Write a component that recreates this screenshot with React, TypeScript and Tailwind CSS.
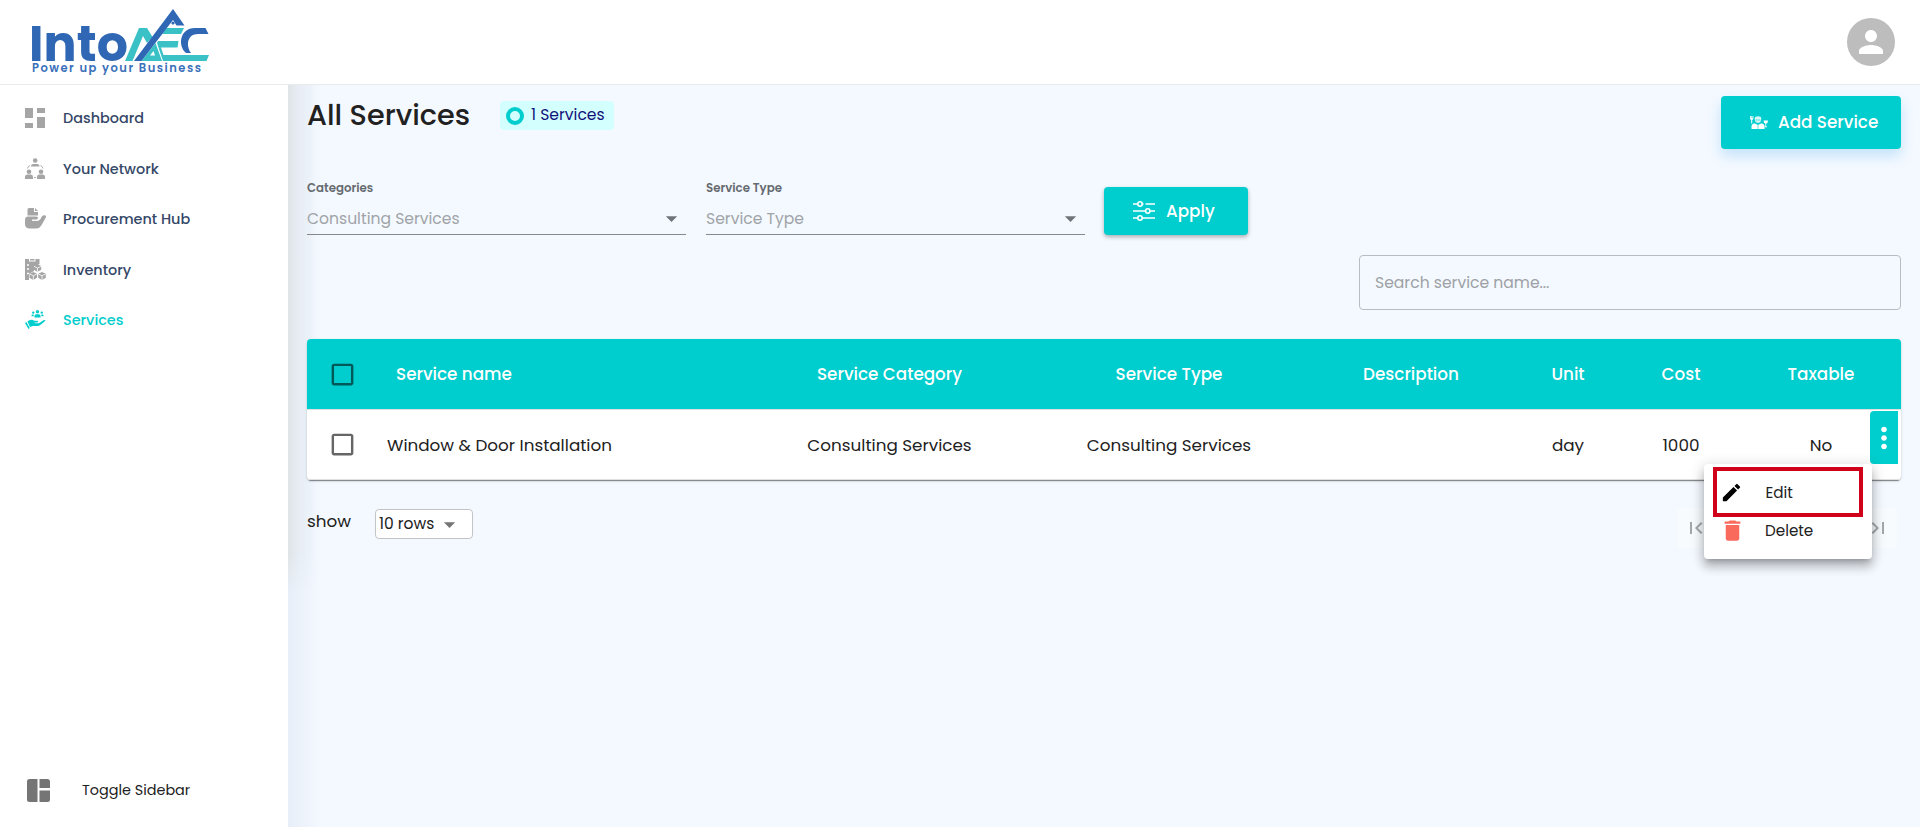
import { ReactNode } from 'react'
import {
  MdArrowDropDown,
  MdCheckBoxOutlineBlank,
  MdDelete,
  MdEdit,
  MdFirstPage,
  MdLastPage,
  MdMoreVert,
  MdPerson,
} from 'react-icons/md'

const Logo = () => (
  <svg width="190" height="76" viewBox="25 4 190 76">
    <text x="29" y="60.500" textLength="99" fontSize="49" fontWeight="700" fill="#2f67b5">
      Into
    </text>
    <g fill="#39c1c5">
      <path d="M125 61 L139 28 H147 L152.500 37 L147 43 L143 36 L132.500 61Z" />
      <path d="M141.500 61 L155.500 43 L162 61Z M150 55.500 H155 L153.500 51Z" fillRule="evenodd" />
      <path d="M162 34 L166.500 28 H184 L181 34Z" />
      <path d="M158 41 H178.500 L177.500 47.500 H161 L163.500 55 H209 L206.500 61 H163 L157 43Z" />
    </g>
    <g fill="#2f67b5">
      <path d="M134 61 L173 9 L184.500 25.500 H176.500 L173 20 L141.500 61Z" />
      <circle cx="173" cy="23" r="1.600" />
      <path d="M208.500 34 H198 C187.500 34 185.500 45 191 53 H186 C177.500 46 179.500 28 195 28 H205.500Z" />
    </g>
    <text x="32" y="72" textLength="169" fontSize="11.500" fontWeight="600" fill="#3a70ba">
      Power up your Business
    </text>
  </svg>
)

const DashboardIcon = () => (
  <svg width="20" height="20" viewBox="0 0 20 20" fill="currentColor">
    <path d="M0 0h8v10H0zM0 15h8v5H0zM12 0h8v5h-8zM12 9h8v11h-8z" />
  </svg>
)

const NetworkIcon = () => (
  <svg width="20" height="21" viewBox="0 0 20 21" fill="currentColor">
    <circle cx="10.200" cy="2.500" r="2.300" />
    <path d="M6 8.500q0-2.500 2.500-2.500h3.500q2.500 0 2.500 2.500zM0 21v-2q0-2.500 2.500-2.500h3.500q2 0 2 2.500v2zM12 21v-2q0-2.500 2.500-2.500h3q2.500 0 2.500 2.500v2z" />
    <circle cx="4" cy="13.700" r="2.300" />
    <circle cx="16" cy="13.700" r="2.300" />
    <path d="M5 7.500q-2.300 1-2.500 3M15.500 7.500q2.300 1 2.500 3M9 19.500h2" fill="none" stroke="currentColor" strokeWidth=".9" />
  </svg>
)

const ProcurementIcon = () => (
  <svg width="21" height="21" viewBox="0 0 21 21" fill="currentColor">
    <path d="M2.500 1.500Q2.500 0 4 0h5v3.500q0 .5.5.5H13v3.500H2.500zM10 0l3 3h-3z" />
    <path d="M3 8.500h8q2 0 2 1.500t-2 1.800H7v1h5q2.500 0 3.500-2l1.300-2.300Q18 7 20 7.200q1.500.5.8 2.300L17 16.300q-2 4.200-6 4.200H5q-5 0-5-4.500v-3.500Q0 8.500 3 8.500z" />
    <path d="M7 12.200h5q2.600 0 3.600-2.200" fill="none" stroke="#fff" strokeWidth="1" />
  </svg>
)

const InventoryIcon = () => (
  <svg width="21" height="21" viewBox="0 0 21 21" fill="currentColor">
    <path d="M0 0h4v2.500h6.500V0h4v5L9 8v4l-5 3v6H0zM5 0h4.500v1.500H5z" />
    <path d="M2 6h2M2 10h2M2 14.500h2" stroke="#fff" strokeWidth="1.500" />
    <path d="M12.500 5.300l3.700 1.800v3.600l-3.700 2-3.700-2V7.100zM8.300 13l3.700 1.800v4L8.300 21l-3.800-2.200v-4zM17 13l3.800 1.800v4L17 21l-3.800-2.200v-4z" />
    <path d="M9 7.300l3.500 1.800L16 7.300M12.500 9v3.500M4.800 15l3.500 1.800L11.800 15M8.300 17v4M13.500 15l3.500 1.800 3.500-1.800M17 17v4" stroke="#fff" strokeWidth=".8" fill="none" />
  </svg>
)

const ServicesIcon = () => (
  <svg width="21" height="19" viewBox="0 0 21 19" fill="currentColor">
    <circle cx="12.500" cy="1.800" r="1.700" />
    <circle cx="8.200" cy="2.600" r="1.200" />
    <circle cx="16.800" cy="2.600" r="1.200" />
    <path d="M9.500 7.500V6q0-1.800 1.800-1.800h2.400q1.800 0 1.800 1.800v1.500zM6.500 6.300V5.500q0-1 1-1h1.200v1.800zM16.300 6.300V4.500h1.200q1 0 1 1v.8z" />
    <path d="M0 13l1.300-1 3.500 6-1.300 1zM2.500 11.500Q5 9 7.500 10l2 .7h3q1.500.8 0 1.800H9.500l.3.700h4l4.700-3q2-.7 2 .6l-5.500 4.500q-1 .8-2.500.8H8l-3 .9z" />
  </svg>
)

const SlidersIcon = () => (
  <svg width="22" height="20" viewBox="0 0 22 20" fill="none" stroke="currentColor" strokeWidth="1.600">
    <path d="M0 3h4.500M9.500 3h1M12.500 3H22M0 10h12M17.500 10H22M0 17h4.500M9.500 17H22" />
    <circle cx="7" cy="3" r="2.200" />
    <circle cx="14.800" cy="10" r="2.200" />
    <circle cx="7" cy="17" r="2.200" />
  </svg>
)

const AddServiceIcon = () => (
  <svg width="18" height="13" viewBox="0 0 18 13" fill="currentColor">
    <path d="M4.800 2.200Q5 .3 8 .3t3.200 1.900v1.500Q10.800 6.800 8 6.800T4.800 3.700z" opacity=".85" />
    <path d="M1.500 13V10.500Q1.500 8 4.500 7.300L8 9l3.500-1.700q2 .5 3 2.200V13z" />
    <path d="M0 0h.8v2.200h.5V0h.8v2.200h.5V0h.8v3L2.200 4v3.500H1.200V4L0 3zM13.500 4.500H18q0 2.500-1.800 3v3h.8v.8h-2.400v-.8h.8v-3q-1.900-.5-1.900-3z" />
    <path d="M8 9v4M5.500 4h5" stroke="#00cdcd" strokeWidth=".6" />
  </svg>
)

const ToggleIcon = () => (
  <svg width="23" height="23" viewBox="0 0 23 23" fill="#757575">
    <path d="M2.500 0H10.500v23H2.500Q0 23 0 20.500v-18Q0 0 2.500 0zM12.500 0h7.700Q23 0 23 2.500V9H12.500zM12.500 11.500H23v9q0 2.500-2.500 2.500h-8z" />
  </svg>
)

const Brand = ({ children, className = '' }: { children: ReactNode; className?: string }) => (
  <button className={`flex items-center rounded bg-[#00cdcd] text-[16.8px] font-medium whitespace-nowrap text-white ${className}`}>
    {children}
  </button>
)

const navItems = [
  { label: 'Dashboard', icon: <DashboardIcon /> },
  { label: 'Your Network', icon: <NetworkIcon /> },
  { label: 'Procurement Hub', icon: <ProcurementIcon /> },
  { label: 'Inventory', icon: <InventoryIcon /> },
  { label: 'Services', icon: <ServicesIcon />, active: true },
]

const columns = ['Service Category', 'Service Type', 'Description', 'Unit', 'Cost', 'Taxable']

const service = {
  name: 'Window & Door Installation',
  cells: ['Consulting Services', 'Consulting Services', '', 'day', '1000', 'No'],
}

const gridCols = 'grid grid-cols-[70px_371px_283px_276px_208px_106px_120px_160px] items-center text-[16.8px]'

const Filter = ({ label, value }: { label: string; value: string }) => (
  <div className="w-[379px]">
    <div className="h-5 text-[11.8px] leading-5 font-semibold text-[#666b70]">{label}</div>
    <div className="flex h-[37px] items-center justify-between border-b border-[#85898d] pt-1 pr-px">
      <span className="pt-0.5 text-[15.6px] text-[#a0a4a8]">{value}</span>
      <MdArrowDropDown className="size-[27px] text-[#6f7478]" />
    </div>
  </div>
)

export default function App() {
  return (
    <div className="flex h-[827px] flex-col overflow-hidden bg-white font-['Poppins','Inter',sans-serif] text-[#212121]">
      <header className="flex h-[85px] shrink-0 items-center justify-between border-b border-[#e7ebee] pr-[25px] pl-[25px]">
        <Logo />
        <div className="flex size-12 items-center justify-center rounded-full bg-[#bdbdbd] text-white">
          <MdPerson className="size-9" />
        </div>
      </header>

      <div className="flex flex-1">
        <aside className="flex w-[288px] shrink-0 flex-col justify-between">
          <nav className="flex flex-col pt-2">
            {navItems.map((item) => (
              <a
                key={item.label}
                className={`flex h-[50.4px] items-center pl-[25px] text-[14.4px] font-medium ${item.active ? 'text-[#00cdcd]' : 'text-[#344767]'}`}
              >
                <span className={`flex w-[38px] ${item.active ? '' : 'text-[#a5a5a5]'}`}>{item.icon}</span>
                <span className="pt-0.5">{item.label}</span>
              </a>
            ))}
          </nav>
          <div className="flex items-center pb-[25px] pl-[27px]">
            <ToggleIcon />
            <span className="pt-px pl-8 text-[14.4px]">Toggle Sidebar</span>
          </div>
        </aside>

        <main className="relative flex-1 bg-[#f4f9ff] bg-[linear-gradient(to_right,#e8eef8,#f4f9ff_34px)] px-[19px] pt-[11px]">
          <div className="pointer-events-none absolute top-0 left-0 h-[505px] w-[28px] bg-[linear-gradient(to_right,#dfe4e6,#e6ecf3cc_40%,#f4f9ff00)] [mask-image:linear-gradient(#000_93%,transparent)]" />

          <div className="relative flex items-start justify-between">
            <div className="flex items-start">
              <h1 className="w-[193px] pt-px text-[28.7px] leading-[37px] font-medium whitespace-nowrap">All Services</h1>
              <div className="mt-[5px] flex h-[29px] w-[114px] items-center rounded bg-[#d3ffff] pl-1.5 whitespace-nowrap text-[#11117a]">
                <span className="mr-[7px] size-[18px] rounded-full border-4 border-[#00cdcd]" />
                <span className="-mt-px text-[15.6px]">1 Services</span>
              </div>
            </div>
            <Brand className="h-[53px] w-[180px] gap-[10px] pl-[29px] shadow-[0_7px_14px_rgba(0,140,230,0.2)]">
              <AddServiceIcon />
              Add Service
            </Brand>
          </div>

          <div className="relative mt-[29px] flex">
            <Filter label="Categories" value="Consulting Services" />
            <div className="w-5" />
            <Filter label="Service Type" value="Service Type" />
            <Brand className="mt-[9px] ml-[19px] h-12 w-36 gap-[11px] pl-[29px] shadow-[0_2px_4px_rgba(0,0,0,0.3)]">
              <SlidersIcon />
              <span className="pt-0.5">Apply</span>
            </Brand>
          </div>

          <div className="mt-5 ml-auto flex h-[55px] w-[542px] items-center rounded border border-[#b9bdc2] px-[15px] text-[15.6px] text-[#9da1a5]">
            Search service name...
          </div>

          <section className="relative mt-[29px] rounded bg-white shadow-[0_2px_1px_-1px_rgba(0,0,0,0.3),0_1px_1px_rgba(0,0,0,0.18),0_1px_3px_rgba(0,0,0,0.14)]">
            <div className={`${gridCols} h-[71px] rounded-t border-b border-[#e0e0e0] bg-[#00cdcd] font-medium text-white`}>
              <MdCheckBoxOutlineBlank className="ml-[21px] size-[29px] text-[#025959]" />
              <span className="pt-0.5 pl-[19px]">Service name</span>
              {columns.map((col) => (
                <span key={col} className="pt-0.5 text-center">
                  {col}
                </span>
              ))}
            </div>
            <div className={`${gridCols} relative h-[70px] border-b border-[#e0e0e0]`}>
              <MdCheckBoxOutlineBlank className="ml-[21px] size-[29px] text-[#666]" />
              <span className="pt-0.5 pl-2.5">{service.name}</span>
              {service.cells.map((cell, i) => (
                <span key={i} className="pt-0.5 text-center">
                  {cell}
                </span>
              ))}
              <button className="absolute top-px right-[3px] flex h-[53px] w-7 items-center justify-center rounded-l bg-[#00cdcd] text-white">
                <MdMoreVert className="size-[34px] shrink-0" />
              </button>
            </div>

            {/* Row actions menu */}
            <div className="absolute top-[125px] right-[29px] z-10 h-[95px] w-[168px] rounded bg-white text-[15.2px] shadow-[0_5px_5px_-3px_rgba(0,0,0,0.2),0_8px_10px_1px_rgba(0,0,0,0.16),0_3px_14px_2px_rgba(0,0,0,0.14)]">
              <div className="mt-[3px] ml-[9px] flex h-[50px] w-[150px] items-center border-4 border-[#d0021b] pl-[3px]">
                <MdEdit className="size-[23px] text-black" />
                <span className="ml-[22.500px] pt-0.5">Edit</span>
              </div>
              <div className="flex h-7 items-center pl-[15px]">
                <MdDelete className="-mt-px size-[27px] text-[#f96a5d]" />
                <span className="ml-[19px]">Delete</span>
              </div>
            </div>
          </section>

          <footer className="relative mt-[28px] flex justify-between pr-1">
            <div className="flex pt-px">
              <span className="w-[68px] text-[16.8px] leading-6">show</span>
              <div className="flex h-[30px] w-[98px] items-center rounded border border-[#c2c4c6] bg-white pl-[3px] text-[15.5px]">
                <span className="w-[57px] whitespace-nowrap">10 rows</span>
                <MdArrowDropDown className="size-[27px] shrink-0 text-[#757575]" />
              </div>
            </div>
            <div className="flex h-10 w-[220px] items-center justify-between rounded bg-[#f8fbfe] px-[7px] text-[#a4a7a9]">
              <MdFirstPage className="size-6" />
              <MdLastPage className="size-6" />
            </div>
          </footer>
        </main>
      </div>
    </div>
  )
}
